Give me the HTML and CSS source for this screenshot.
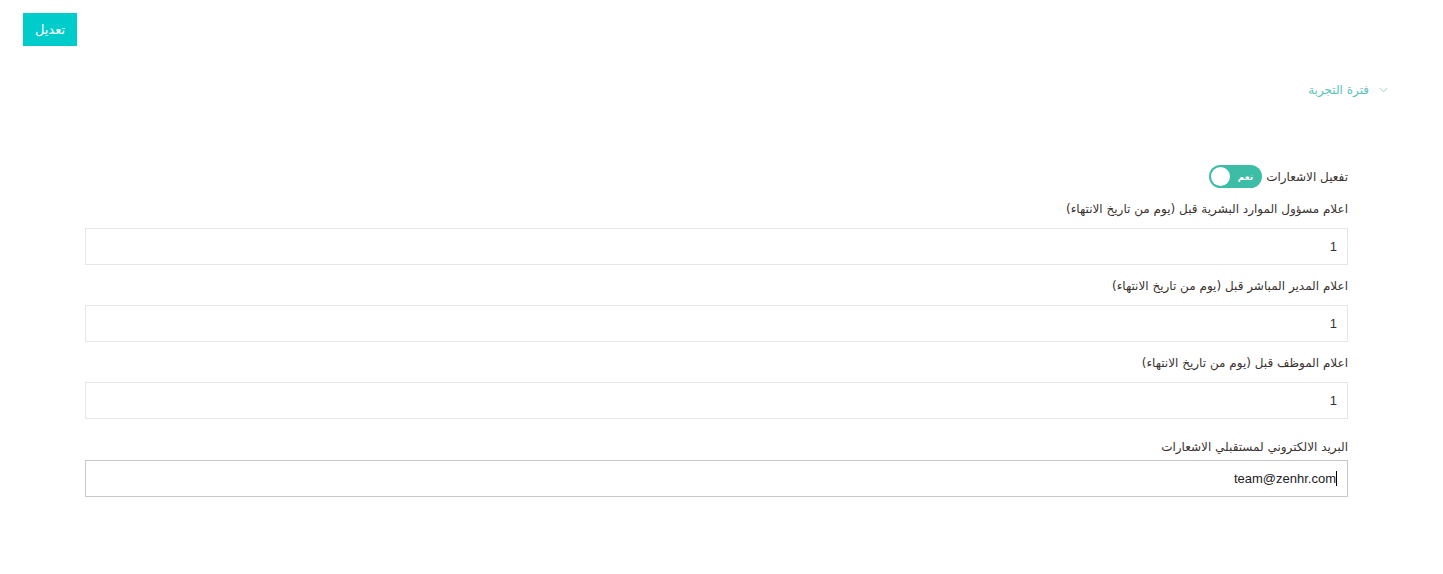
FILE: index.html
```html
<!DOCTYPE html>
<html lang="ar" dir="rtl">
<head>
<meta charset="utf-8">
<title>فترة التجربة</title>
<link rel="stylesheet" href="styles.css">
</head>
<body>
<div class="topbar">
  <button class="btn-edit">تعديل</button>
</div>
<div class="section-head">
  <svg class="chev" width="9" height="6" viewBox="0 0 9 6"><path d="M0.5 0.8 L4.5 4.8 L8.5 0.8" fill="none" stroke="#9ad3cc" stroke-width="1"/></svg>
  <span class="section-title">فترة التجربة</span>
</div>
<form class="form">
  <div class="toggle-row">
    <span class="toggle-label">تفعيل الاشعارات</span>
    <span class="toggle"><span class="toggle-text">نعم</span><span class="knob"></span></span>
  </div>
  <div class="field">
    <label class="field-label">اعلام مسؤول الموارد البشرية قبل (يوم من تاريخ الانتهاء)</label>
    <input class="field-input" type="text" value="1">
  </div>
  <div class="field">
    <label class="field-label">اعلام المدير المباشر قبل (يوم من تاريخ الانتهاء)</label>
    <input class="field-input" type="text" value="1">
  </div>
  <div class="field">
    <label class="field-label">اعلام الموظف قبل (يوم من تاريخ الانتهاء)</label>
    <input class="field-input" type="text" value="1">
  </div>
  <div class="field field-email">
    <label class="field-label">البريد الالكتروني لمستقبلي الاشعارات</label>
    <div class="field-input focused"><span class="caret"></span><span dir="ltr">team@zenhr.com</span></div>
  </div>
</form>
</body>
</html>
```
FILE: styles.css
```css
* { box-sizing: border-box; }
html, body { margin: 0; padding: 0; background: #fff; }
body {
  width: 1443px;
  height: 574px;
  overflow: hidden;
  font-family: "DejaVu Sans", "Liberation Sans", sans-serif;
  color: #333;
}
.topbar {
  display: flex;
  justify-content: flex-end;
  padding: 13px 0 0 23px;
}
.btn-edit {
  width: 54px;
  height: 33px;
  border: none;
  background: #00cccc;
  color: #fff;
  font-family: "DejaVu Sans", sans-serif;
  font-size: 13px;
  font-weight: normal;
  padding: 0;
}
.section-head {
  display: flex;
  align-items: center;
  gap: 10px;
  padding-right: 55px;
  margin-top: 35px;
  height: 18px;
}
.section-title {
  color: #5cc3b8;
  font-size: 12px;
}
.chev { display: block; }
.form {
  padding: 0 95px 0 85px;
  margin-top: 66px;
}
.toggle-row {
  display: flex;
  align-items: center;
  gap: 4px;
  height: 23px;
}
.toggle-label {
  font-size: 12px;
  color: #3a3330;
  letter-spacing: -0.1px;
}
.toggle {
  position: relative;
  width: 53px;
  height: 23px;
  border-radius: 12px;
  background: #3dbda5;
  display: flex;
  align-items: center;
  justify-content: flex-start;
  padding-right: 9px;
}
.toggle-text {
  color: #fff;
  font-size: 9px;
  font-weight: bold;
}
.knob {
  position: absolute;
  left: 2px;
  top: 2px;
  width: 19px;
  height: 19px;
  border-radius: 50%;
  background: #fff;
}
.field { margin-top: 12px; }
.field + .field { margin-top: 13px; }
.field-label {
  display: block;
  font-size: 12px;
  line-height: 18px;
  height: 18px;
  color: #3a3330;
  margin-bottom: 10px;
}
.field-input {
  display: block;
  width: 100%;
  height: 37px;
  border: 1px solid #e6e6e6;
  background: #fff;
  font-family: "Liberation Sans", sans-serif;
  font-size: 13px;
  color: #333;
  padding: 0 10px;
  text-align: right;
  outline: none;
}
.field + .field { margin-top: 12px; }
.field.field-email { margin-top: 19px; }
.field-email .field-label { margin-bottom: 4px; }
.field-input.focused {
  display: flex;
  align-items: center;
  border-color: #c9c9c9;
  padding-right: 10px;
  color: #222;
}
.caret {
  display: inline-block;
  width: 1px;
  height: 15px;
  background: #000;
}
```
